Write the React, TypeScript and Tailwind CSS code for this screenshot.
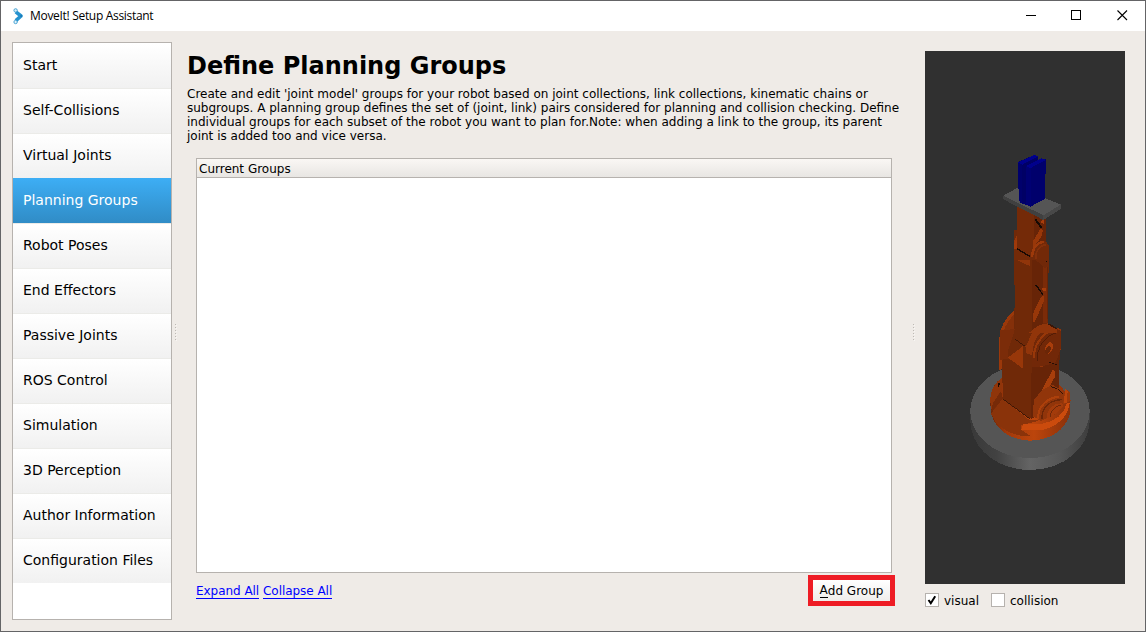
import React from "react";

const steps = [
  "Start",
  "Self-Collisions",
  "Virtual Joints",
  "Planning Groups",
  "Robot Poses",
  "End Effectors",
  "Passive Joints",
  "ROS Control",
  "Simulation",
  "3D Perception",
  "Author Information",
  "Configuration Files",
];

function AppIcon() {
  return (
    <svg width="12" height="17" viewBox="0 0 12 17" fill="none">
      <path d="M3.8 3.8 L9 8 L3.8 12.6" stroke="#2492cf" strokeWidth="3.6" strokeLinejoin="round" />
      <circle cx="3.6" cy="2.4" r="1.7" fill="#d5ecf8" stroke="#3b9cd0" strokeWidth="0.9" />
      <circle cx="3.6" cy="14" r="1.7" fill="#e4f3fa" stroke="#3b9cd0" strokeWidth="0.9" />
      <circle cx="9.2" cy="8" r="1" fill="#1b78b4" />
    </svg>
  );
}

function TitleBar() {
  return (
    <header className="flex h-[30px] shrink-0 items-center bg-white pl-[11px] pr-[17px]">
      <AppIcon />
      <h1 className="ml-[6px] grow whitespace-nowrap font-['Open_Sans','Noto_Sans',sans-serif] text-[12px] leading-4 tracking-[-0.31px] text-black">
        MoveIt! Setup Assistant
      </h1>
      <svg width="102" height="12" viewBox="0 0 102 12" fill="none" stroke="#000" shapeRendering="crispEdges">
        <path d="M0 5.5H10" />
        <rect x="45.5" y="0.5" width="9" height="9" />
        <path d="M91.5 0.5L101 10M101 0.5L91.5 10" shapeRendering="auto" strokeWidth="1.1" />
      </svg>
    </header>
  );
}

function Sidebar() {
  return (
    <nav className="h-[578px] w-[160px] shrink-0 border border-[#b6b2ae] bg-white">
      {steps.map((step) => (
        <div
          key={step}
          className={
            step === "Planning Groups"
              ? "h-[45px] bg-linear-to-b from-[#3daef5] to-[#308cc6] pl-[10px] pt-px text-[14px] text-white"
              : "h-[45px] border-t border-[#ebebe8] bg-linear-to-b from-white to-[#f1f1f1] pl-[10px] text-[14px] text-black first:border-white"
          }
        >
          <span className="block whitespace-nowrap leading-[43px]">{step}</span>
        </div>
      ))}
    </nav>
  );
}

function Splitter() {
  return (
    <svg width="2" height="18" viewBox="0 0 2 18" shapeRendering="crispEdges">
      <path d="M0.5 0V18" stroke="#bdb9b4" strokeWidth="1" strokeDasharray="1 2" />
      <path d="M1.5 1V18" stroke="#f8f6f4" strokeWidth="1" strokeDasharray="1 2" />
    </svg>
  );
}

function Robot() {
  return (
    <svg className="block" width="200" height="533" viewBox="925 51 200 533" shapeRendering="crispEdges">
      <defs>
        <linearGradient id="rim">
          <stop offset="0" stopColor="#393939" />
          <stop offset="0.22" stopColor="#424242" />
          <stop offset="0.5" stopColor="#646464" />
          <stop offset="0.75" stopColor="#565656" />
          <stop offset="1" stopColor="#3d3d3d" />
        </linearGradient>
        <linearGradient id="collar">
          <stop offset="0" stopColor="#6b2607" />
          <stop offset="0.2" stopColor="#a0390b" />
          <stop offset="0.55" stopColor="#bc450c" />
          <stop offset="1" stopColor="#8a310a" />
        </linearGradient>
      </defs>
      {/* pedestal and shoulder */}
      <g transform="translate(960 330) scale(0.33333)">
        <path d="M31 243V275C34 355 110 420 210 420S386 355 389 275V243Z" fill="url(#rim)" />
        <ellipse cx="210" cy="243" rx="179" ry="141" fill="#555" />
        <path d="M90 215C90 180 105 158 125 143L300 165L330 205L330 250C318 302 266 332 210 332C145 330 98 292 93 242Z" fill="url(#collar)" />
        <path d="M93 251L129 206L208 270L240 272L184 285L184 300L212 318C158 323 107 291 93 251Z" fill="#8a330a" />
        <path d="M90 210C92 179 105 158 123 147V182L99 219L96 245Z" fill="#8f350a" />
        <path d="M99 218L123 184L129 206L93 246Z" fill="#762a08" />
        <path d="M115 159L121 157L117 171L113 172Z" fill="#1c0a03" />
        <path d="M190 283L247 281C288 274 313 251 321 217L329 220C323 263 288 291 247 300H183Z" fill="#cb4b0d" />
        <path d="M316 177L329 186L332 213L309 223Z" fill="#9b390a" />
        <path d="M316 177L323 185L320 218L311 221Z" fill="#ba450c" />
      </g>
      {/* upper arm */}
      <g transform="translate(960 240) scale(0.33333)">
        <path d="M163 212C137 231 118 266 118 294V390L163 375Z" fill="#9b380a" />
        <path d="M163 223C141 243 127 272 127 300V360L163 370Z" fill="#84300a" />
        <path d="M162 205H263V270H162Z" fill="#6d2808" />
      </g>
      <g transform="translate(960 330) scale(0.33333)">
        <path d="M123 0H298L296 172L250 245L208 267L129 207Z" fill="#702908" />
        <path d="M215 90L240 5L301 10L296 172L225 260L213 267Z" fill="#672407" />
        <path d="M120 0H137L165 -3L144 62L146 86L121 90Z" fill="#7b2c09" />
        <path d="M144 83L189 48V116Z" fill="#983709" />
        <path d="M163 0H207L193 45L144 83Z" fill="#702908" />
        <path d="M164 27L198 51" stroke="#2a1005" strokeWidth="2" />
        <path d="M196 43C202 9 225 -12 263 -19L304 -1V54L288 93L267 95L247 112H217V76L198 70Z" fill="#91350a" />
        <path d="M217 70C220 20 246 -8 284 -8L304 4V50C296 76 290 92 283 100L230 112H217Z" fill="#722808" />
        <path d="M223 84C218 51 245 12 276 1" stroke="#983709" strokeWidth="6" fill="none" />
        <path d="M233 94C226 61 250 20 287 9" stroke="#451704" strokeWidth="2" fill="none" />
        <ellipse cx="267" cy="54" rx="11" ry="18" fill="#a83d0b" transform="rotate(23 267 54)" />
        <ellipse cx="264" cy="60" rx="7" ry="13" fill="#6b2607" transform="rotate(23 264 60)" />
        <path d="M266 97L291 104" stroke="#250e05" strokeWidth="3" strokeDasharray="7 3" />
        <path d="M278 119L286 124V139L252 197H237Z" fill="#a83e0b" />
        <path d="M222 208L250 178L279 164L311 189L308 223L285 253L242 273L218 258Z" fill="#91350a" />
        <path d="M235 267C232 231 260 203 298 200" stroke="#ad400b" strokeWidth="6" fill="none" />
        <path d="M246 268C244 234 269 210 305 209" stroke="#6c2607" strokeWidth="4" fill="none" />
        <path d="M259 266C260 238 278 220 307 219L309 230L290 250Z" fill="#a33b0b" />
        <path d="M270 260C271 244 282 231 302 225" stroke="#702808" strokeWidth="3" fill="none" />
        <path d="M274 170L292 176L308 192" stroke="#301306" strokeWidth="3" fill="none" />
        <path d="M129 207L210 267" stroke="#220d04" strokeWidth="2" />
      </g>
      {/* elbow and forearm */}
      <g transform="translate(960 240) scale(0.33333)">
        <path d="M162 -30H258V42L266 80L263 205V250L215 280L198 320L165 292Z" fill="#702908" />
        <path d="M217 45L263 20V238L216 278Z" fill="#672407" />
        <path d="M250 75H262V247L250 250Z" fill="#7b2b08" />
        <path d="M216 272C228 259 243 252 263 250L291 266V280H205Z" fill="#91350a" />
        <path d="M169 59L178 43L211 56V79Z" fill="#91350a" />
        <path d="M162 3L171 -16V25L163 21Z" fill="#983709" />
        <path d="M171 26L211 50" stroke="#1b0a04" strokeWidth="4" />
        <path d="M211 51C211 18 228 0 249 0L267 18V80L254 84L225 58Z" fill="#712808" />
        <path d="M216 52C216 22 232 5 251 5" stroke="#9a380a" strokeWidth="8" fill="none" />
        <path d="M228 57C225 32 238 16 257 12" stroke="#84300a" strokeWidth="5" fill="none" />
        <circle cx="260" cy="64" r="2" fill="#180903" />
        <path d="M227 134L249 164" stroke="#160a04" strokeWidth="4" />
        <path d="M246 145L257 144V153H249Z" fill="#a53c0b" />
        <path d="M241 174L251 167L252 183L224 247H219V221Z" fill="#983709" />
        <path d="M263 252L267 250L291 264L289 269Z" fill="#391607" />
      </g>
      {/* wrist */}
      <g transform="translate(960 140) scale(0.33333)">
        <path d="M172 201H258V305L268 326V360H163V311L172 294Z" fill="#742a08" />
        <path d="M222 225H258V310L222 333Z" fill="#682407" />
        <path d="M162 310L172 295V327L163 326Z" fill="#9f390a" />
        <path d="M211 360V332L226 311L243 303L258 305L268 320V360Z" fill="#732908" />
        <path d="M216 350C219 322 232 307 252 306" stroke="#9d390a" strokeWidth="7" fill="none" />
        <path d="M228 356C225 335 237 319 257 314" stroke="#84300a" strokeWidth="5" fill="none" />
        <path d="M171 326L211 350" stroke="#180903" strokeWidth="4" />
        <path d="M226 238L244 263" stroke="#160a04" strokeWidth="6" />
        <path d="M241 243L251 240V252L244 249Z" fill="#a83d0b" />
        <path d="M240 268L249 269L246 286L230 310L219 322L220 302Z" fill="#983709" />
        {/* flange */}
        <path d="M130 167V178L250 240V226Z" fill="#404040" />
        <path d="M250 224L302 193V207L250 240Z" fill="#484848" />
        <path d="M130 167L177 141L302 194L250 226Z" fill="#555" />
        {/* gripper */}
        <path d="M174 66L222 45L234 49V65L258 57V103H255V177L211 200L198 194L183 190L177 181V146H174Z" fill="#00006c" />
        <path d="M174 68L222 45L234 49L187 74Z" fill="#00008c" />
        <path d="M197 78L245 55L258 60L212 84Z" fill="#00008c" />
        <path d="M187 74L234 51V60L197 78V188L187 188Z" fill="#000065" />
        <path d="M197 79L212 84V199L198 194Z" fill="#000073" />
      </g>
    </svg>
  );
}

export default function App() {
  return (
    <div className="flex h-[632px] w-[1146px] flex-col overflow-hidden border border-[#646466] bg-[#efebe7] font-['DejaVu_Sans',sans-serif] text-[12px] leading-[14px] text-black">
      <TitleBar />
      <div className="flex grow pl-[11px] pt-[11px]">
        <Sidebar />
        <div className="flex w-[6px] shrink-0 pl-[3px] pt-[282px]">
          <Splitter />
        </div>
        <main className="flex w-[732px] shrink-0 flex-col pl-[9px] pt-[8px]">
          <h2 className="whitespace-nowrap text-[24px] font-bold leading-8">Define Planning Groups</h2>
          <p className="mt-[5px] whitespace-nowrap">
            Create and edit 'joint model' groups for your robot based on joint collections, link collections, kinematic chains or
            <br />
            subgroups. A planning group defines the set of (joint, link) pairs considered for planning and collision checking. Define
            <br />
            individual groups for each subset of the robot you want to plan for.Note: when adding a link to the group, its parent
            <br />
            joint is added too and vice versa.
          </p>
          <section className="ml-[9px] mt-[15px] h-[415px] w-[696px] border border-[#b6b2ae] bg-white">
            <div className="h-[19px] border-b border-[#b6b2ae] bg-linear-to-b from-[#faf7f4] to-[#e8e6e3] pl-[2px] leading-5">
              Current Groups
            </div>
          </section>
          <div className="ml-[9px] flex w-[699px] items-start pt-[2px]">
            <a className="mt-[9px] w-[63px] whitespace-nowrap border-b border-[#0000ff] tracking-[-0.04px] text-[#0000ff]">Expand All</a>
            <a className="ml-[4px] mt-[9px] w-[69px] whitespace-nowrap border-b border-[#0000ff] tracking-[-0.04px] text-[#0000ff]">Collapse All</a>
            <button className="ml-auto flex h-[31px] w-[87px] items-center justify-center whitespace-nowrap border-[5px] border-[#ee1c25] bg-linear-to-b from-white to-[#efedeb]">
              <span className="border-b border-black">A</span>dd Group
            </button>
          </div>
        </main>
        <div className="flex w-[6px] shrink-0 pl-[3px] pt-[282px]">
          <Splitter />
        </div>
        <aside className="flex flex-col pl-[9px] pt-[9px]">
          <div className="h-[533px] w-[200px] bg-[#303030]">
            <Robot />
          </div>
          <div className="mt-[9px] flex h-[14px] items-center">
            <span className="flex size-[14px] items-center justify-center border border-[#b6b2ae] bg-white">
              <svg width="10" height="10" viewBox="0 0 10 10" fill="none">
                <path d="M1.5 5L3.8 8.2L8.2 1.2" stroke="#000" strokeWidth="2" />
              </svg>
            </span>
            <span className="ml-[5px] mt-px">visual</span>
            <span className="ml-[12px] size-[14px] border border-[#b6b2ae] bg-white" />
            <span className="ml-[5px] mt-px">collision</span>
          </div>
        </aside>
      </div>
    </div>
  );
}
